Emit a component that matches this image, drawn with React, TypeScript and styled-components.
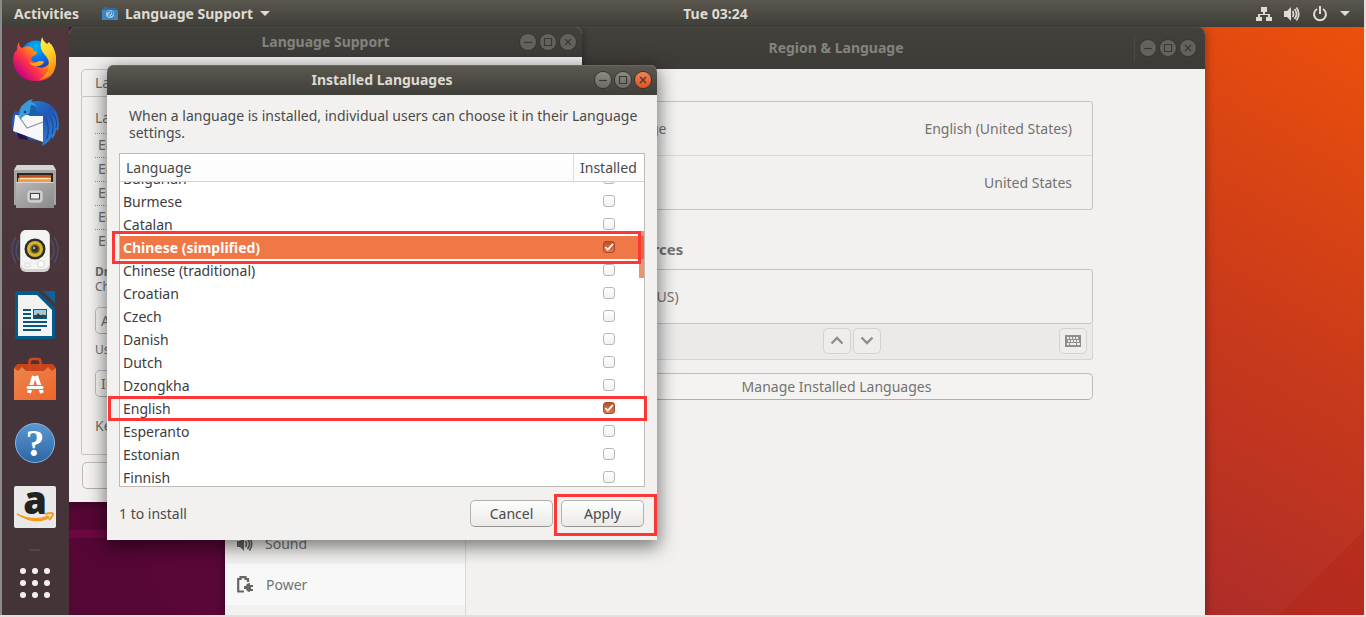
import React, { useEffect, useRef, useState } from "react";
import styled, { createGlobalStyle, css } from "styled-components";

const GlobalStyle = createGlobalStyle`
  * { box-sizing: border-box; }
  body { margin: 0; background: #fff; }
  body, button, input, table {
    font-family: "Noto Sans", "Open Sans", sans-serif;
    font-size: 14px;
    line-height: 18px;
  }
  button { margin: 0; padding: 0; cursor: default; }
  h1, h2, p, ul { margin: 0; padding: 0; }
  ul { list-style: none; }
`;

const Screen = styled.div`
  display: flex;
  flex-direction: column;
  height: 100vh;
  overflow: hidden;
  border: solid #e2e0df;
  border-width: 0 2px 2px 0;
  box-shadow: inset 2px 0 #8b8b8a;
  padding-left: 2px;
`;

/* ---------- top bar ---------- */

const TopBar = styled.header`
  display: grid;
  grid-template-columns: 10fr auto 9fr;
  align-items: center;
  height: 27px;
  flex: none;
  padding: 0 14px 0 12px;
  background: linear-gradient(#5a574e, #3e3d38);
  color: #dfdbd2;
  font-weight: 700;
`;

const BarGroup = styled.div<{ $end?: boolean }>`
  display: flex;
  align-items: center;
  gap: ${(p) => (p.$end ? 12 : 23)}px;
  justify-content: ${(p) => (p.$end ? "flex-end" : "flex-start")};
`;

const BarButton = styled.button`
  display: flex;
  align-items: center;
  gap: 7px;
  border: 0;
  background: none;
  color: inherit;
  font-weight: 700;
`;

/* ---------- desktop and dock ---------- */

const Workspace = styled.div`
  display: flex;
  flex: 1;
  min-height: 0;
`;

const Dock = styled.nav`
  display: flex;
  flex-direction: column;
  align-items: center;
  width: 67px;
  flex: none;
  padding-right: 2px;
  background: linear-gradient(#50373c, #46343a 60%, #443438);
`;

const DockButton = styled.button`
  display: grid;
  place-items: center;
  width: 64px;
  height: 64px;
  flex: none;
  border: 0;
  background: none;
`;

const DockRule = styled.hr`
  width: 10px;
  height: 2px;
  margin: 10px 0 0;
  flex: none;
  border: 0;
  background: #57464b;
`;

const Desktop = styled.main`
  position: relative;
  flex: 1;
  overflow: hidden;
  background:
    linear-gradient(#0000 503px, #6d0742 503px 511px, #0000 511px) left / 400px 100% no-repeat,
    linear-gradient(60deg, #540634, #6b0a40) left / 400px 100% no-repeat,
    linear-gradient(135deg, #0000 50%, rgba(180, 35, 20, 0.4) 50%) right bottom / 84px 84px no-repeat,
    linear-gradient(30deg, #aa2a2b, #c93a1b 50%, #ec500b) right / 240px 100% no-repeat,
    #c93a1b;
`;

/* ---------- windows ---------- */

const WindowFrame = styled.section<{ $backdrop?: boolean }>`
  position: absolute;
  display: flex;
  flex-direction: column;
  border-radius: 7px 7px 0 0;
  background: #f2f1f0;
  color: ${(p) => (p.$backdrop ? "#72726f" : "#4a4a4a")};
  box-shadow: ${(p) => (p.$backdrop ? "0 2px 10px rgba(0,0,0,.4)" : "0 5px 18px 2px rgba(0,0,0,.5)")};
`;

const RegionWindow = styled(WindowFrame)`
  left: 156px;
  top: 0;
  bottom: 0;
  width: 980px;
`;

const SupportWindow = styled(WindowFrame)`
  left: 0;
  top: 0;
  width: 513px;
  height: 475px;
`;

const DialogWindow = styled(WindowFrame)`
  left: 38px;
  top: 38px;
  width: 550px;
  height: 475px;
`;

const TitleBar = styled.header<{ $backdrop?: boolean; $tall?: boolean }>`
  display: grid;
  grid-template-columns: 1fr auto 1fr;
  align-items: center;
  flex: none;
  height: ${(p) => (p.$tall ? 42 : 30)}px;
  padding: 0 ${(p) => (p.$tall ? 9 : 6)}px;
  border-radius: 7px 7px 0 0;
  background: ${(p) => (p.$backdrop ? "linear-gradient(#42413c, #3c3b37)" : "linear-gradient(#5c594f, #3f3e39)")};
  box-shadow: inset 0 1px ${(p) => (p.$backdrop ? "#4a4944" : "#6a675d")};
  color: ${(p) => (p.$backdrop ? "#84837d" : "#dfdbd2")};
`;

const RegionTitleBar = styled(TitleBar)`
  padding-left: 251px;
`;

const WindowTitle = styled.h1`
  grid-column: 2;
  font-size: 14px;
  line-height: 18px;
  font-weight: 700;
`;

const Controls = styled.div<{ $divided?: boolean }>`
  display: flex;
  gap: 4px;
  justify-self: end;
  ${(p) =>
    p.$divided &&
    css`
      padding: 6px 0 6px 5px;
      border-left: 1px solid #4a4944;
    `}
`;

const ControlButton = styled.button<{ $backdrop?: boolean; $close?: boolean }>`
  display: grid;
  place-items: center;
  width: 16px;
  height: 16px;
  border: 0;
  border-radius: 50%;
  color: #3a3935;
  background: ${(p) =>
    p.$backdrop ? "#64625c" : p.$close ? "linear-gradient(#f58159, #e0501f)" : "linear-gradient(#8d8b84, #6c6a63)"};
  box-shadow: 0 0 0 1px ${(p) => (p.$backdrop ? "#383733" : "#35342f")};
`;

/* ---------- shared controls ---------- */

const PushButton = styled.button<{ $backdrop?: boolean }>`
  height: 27px;
  border: 1px solid ${(p) => (p.$backdrop ? "#bdbcba" : "#b3b2af")};
  border-bottom-color: ${(p) => (p.$backdrop ? "#b0afac" : "#96958f")};
  border-radius: 5px;
  background: ${(p) => (p.$backdrop ? "#f4f3f2" : "linear-gradient(#fdfdfd, #ebeae8)")};
  color: inherit;
`;

/* ---------- Region & Language ---------- */

const RegionBody = styled.div`
  display: flex;
  flex: 1;
  min-height: 0;
`;

const SideBar = styled.ul`
  display: flex;
  flex-direction: column;
  width: 241px;
  padding-top: 454px;
  border-right: 1px solid #d9d8d6;
`;

const SideItem = styled.li<{ $light?: boolean }>`
  display: flex;
  align-items: center;
  gap: 12px;
  height: 41px;
  flex: none;
  padding-left: 12px;
  background: ${(p) => (p.$light ? "#f8f8f8" : "transparent")};
`;

const RegionPane = styled.div`
  flex: 1;
  padding: 32px 112px 0 114px;
`;

const Card = styled.dl`
  margin: 0;
  border: 1px solid #c6c5c2;
  border-radius: 3px;
`;

const CardRow = styled.div`
  display: flex;
  justify-content: space-between;
  align-items: center;
  height: 53px;
  padding: 0 20px;
  dd { margin: 0; }
  & + & { border-top: 1px solid #d9d8d6; height: 54px; }
`;

const SectionTitle = styled.h2`
  margin: 30px 0 11px;
  font-size: 15px;
  line-height: 18px;
  font-weight: 700;
`;

const SourceBar = styled.div`
  display: flex;
  justify-content: flex-end;
  align-items: center;
  gap: 2px;
  height: 36px;
  margin-bottom: 13px;
  padding: 0 5px 2px;
  border: 1px solid #d5d4d2;
  border-top: 0;
  border-radius: 0 0 3px 3px;
  background: #ebeae9;
`;

const ToolButton = styled.button<{ $last?: boolean }>`
  display: grid;
  place-items: center;
  width: 28px;
  height: 26px;
  margin-left: ${(p) => (p.$last ? 176 : 0)}px;
  border: 1px solid #d3d2d0;
  border-radius: 5px;
  background: #eeedec;
  color: #8f8e88;
`;

const ManageButton = styled(PushButton)`
  width: 100%;
`;

/* ---------- Language Support ---------- */

const SupportBody = styled.div`
  display: flex;
  flex-direction: column;
  flex: 1;
  padding: 12px;
`;

const Tab = styled.div`
  align-self: flex-start;
  height: 27px;
  padding: 4px 13px;
  border: 1px solid #c6c5c2;
  border-bottom: 0;
  border-radius: 5px 5px 0 0;
`;

const TabPage = styled.div`
  height: 359px;
  padding: 12px 13px;
  border: 1px solid #c6c5c2;
  border-radius: 2px;
`;

const OrderList = styled.ul`
  margin: 6px 0 11px;
  li {
    height: 24px;
    padding: 2px 3px;
    border-top: 1px dotted #d9826b;
  }
`;

const Note = styled.p<{ $strong?: boolean }>`
  font-size: 12px;
  line-height: 15px;
  font-weight: ${(p) => (p.$strong ? 700 : 400)};
`;

const FormButton = styled(PushButton)`
  display: block;
  width: 160px;
  margin: 13px 0 8px;
  padding-left: 5px;
  text-align: left;
`;

const KeyboardRow = styled.p`
  padding-top: 12px;
`;

const HelpButton = styled(PushButton)`
  width: 84px;
  margin: 7px 0 0 1px;
`;

/* ---------- Installed Languages ---------- */

const DialogBody = styled.div`
  display: flex;
  flex-direction: column;
  flex: 1;
  min-height: 0;
  padding: 12px;
`;

const Intro = styled.p`
  margin: 0 0 12px 10px;
  line-height: 17px;
`;

const ListFrame = styled.div`
  position: relative;
  flex: none;
  height: 334px;
  border: 1px solid #bcbbb8;
  background: #fff;
`;

const ListScroll = styled.div`
  height: 100%;
  overflow-y: scroll;
  scrollbar-width: none;
`;

const LanguageTable = styled.table`
  width: 100%;
  border-collapse: separate;
  border-spacing: 0;
  table-layout: fixed;
  color: #3c3c3c;
  th {
    position: sticky;
    top: 0;
    z-index: 1;
    height: 28px;
    padding: 0 6px;
    border-bottom: 1px solid #d5d4d2;
    background: linear-gradient(#fff, #fbfbfb);
    color: #4a4a4a;
    font-weight: 400;
    text-align: left;
  }
  th + th {
    width: 71px;
    border-left: 1px solid #dedddb;
  }
`;

const LanguageRow = styled.tr<{ $selected?: boolean }>`
  td {
    height: 23px;
    padding: 0 3px;
    background: ${(p) => (p.$selected ? "#f07746" : "#fff")};
    color: ${(p) => (p.$selected ? "#fff" : "inherit")};
    font-weight: ${(p) => (p.$selected ? 700 : 400)};
  }
  td + td {
    padding: 0 0 2px;
    text-align: center;
    line-height: 0;
  }
`;

const Check = styled.input`
  appearance: none;
  width: 12px;
  height: 12px;
  margin: 0;
  border: 1px solid #b9b8b5;
  border-radius: 3px;
  background: linear-gradient(#fff, #f1f1f0);
  &:checked {
    border-color: #a8492a;
    background:
      url("data:image/svg+xml,%3Csvg xmlns='http://www.w3.org/2000/svg' viewBox='0 0 10 10'%3E%3Cpath d='M1.3 5l2.5 2.7L9 1.8' fill='none' stroke='white' stroke-width='1.8'/%3E%3C/svg%3E"),
      linear-gradient(#c34f24, #e0784f);
  }
`;

const ScrollThumb = styled.div`
  position: absolute;
  z-index: 2;
  top: 77px;
  right: 0;
  width: 5px;
  height: 47px;
  background: rgba(235, 100, 50, 0.7);
`;

const Footer = styled.footer`
  display: flex;
  align-items: center;
  gap: 8px;
  margin-top: 13px;
  padding-right: 1px;
  color: #4a4a4a;
`;

const Status = styled.span`
  flex: 1;
`;

const FooterButton = styled(PushButton)`
  width: 83px;
`;

const Highlight = styled.div<{ $box: [number, number, number, number] }>`
  position: absolute;
  z-index: 3;
  left: ${(p) => p.$box[0]}px;
  top: ${(p) => p.$box[1]}px;
  width: ${(p) => p.$box[2]}px;
  height: ${(p) => p.$box[3]}px;
  border: 3px solid #fc3736;
  pointer-events: none;
`;

/* ---------- icons ---------- */

const Caret = () => (
  <svg width="10" height="5" viewBox="0 0 10 5"><path d="M0 0h10L5 5z" fill="#dfdbd2" /></svg>
);

const AppIcon = () => (
  <svg width="16" height="14" viewBox="0 0 16 14">
    <path d="M1 0h5l1 1h7v12H1z" fill="#2b6b9f" />
    <path d="M0 3h16v10H0z" fill="#3d86bd" />
    <circle cx="8" cy="7" r="4" fill="#9fc6e2" />
    <path d="M5 5l3-1 1 2-2 1v3M10 4l1 3-2 2" stroke="#3d7fb4" fill="none" />
  </svg>
);

const NetworkIcon = () => (
  <svg width="16" height="16" viewBox="0 0 16 16" fill="#dfdbd2">
    <path d="M5 1h6v5H9v2h5v3h2v4h-6v-4h2V9H4v2h2v4H0v-4h2V8h5V6H5z" />
  </svg>
);

const VolumeIcon = ({ color = "#dfdbd2" }: { color?: string }) => (
  <svg width="16" height="16" viewBox="0 0 16 16">
    <path d="M0 5h3l4-4v14l-4-4H0z" fill={color} />
    <path d="M8.500 5q2 3 0 6M10.500 3q4 5 0 10M12.500 1.500q4.500 6.500 0 13" fill="none" stroke={color} strokeWidth="1.700" />
  </svg>
);

const PowerIcon = () => (
  <svg width="16" height="16" viewBox="0 0 16 16" fill="none" stroke="#dfdbd2" strokeWidth="2">
    <path d="M5 3a6 6 0 1 0 6 0M8 0v8" />
  </svg>
);

const BatteryIcon = () => (
  <svg width="17" height="17" viewBox="0 0 17 17">
    <path d="M7 15.500H1.200V3h2.300V1.200h5V3H11v3" fill="none" stroke="#666663" strokeWidth="2.200" />
    <path d="M7 10h2c0-2 2-3 4-3v2h3v2h-2v2h2v2h-3v1c-2 0-3.500-1-4-3H7z" fill="#666663" />
  </svg>
);

const KeyboardIcon = () => (
  <svg width="16" height="12" viewBox="0 0 16 12">
    <path d="M0 0h16v12H0z" fill="currentColor" />
    <path d="M2 3h12M3 6h12" stroke="#eeedec" strokeWidth="1.800" strokeDasharray="2 1" />
    <path d="M2 9h2M5 9h6M12 9h3" stroke="#eeedec" strokeWidth="1.800" />
  </svg>
);

const Chevron = ({ down }: { down?: boolean }) => (
  <svg width="14" height="9" viewBox="0 0 14 9" fill="none" stroke="currentColor" strokeWidth="2.400">
    <path d={down ? "M1.500 1.500L7 7l5.500-5.500" : "M1.500 7.500L7 2l5.500 5.500"} />
  </svg>
);

const FirefoxIcon = () => (
  <svg width="46" height="46" viewBox="0 0 46 46">
    <defs>
      <linearGradient id="fxBody" x1="0.900" y1="0.100" x2="0.100" y2="0.800">
        <stop offset="0" stopColor="#fff44f" />
        <stop offset="0.350" stopColor="#ff980e" />
        <stop offset="0.650" stopColor="#ff3647" />
        <stop offset="1" stopColor="#c60084" />
      </linearGradient>
      <linearGradient id="fxTail" x1="0" y1="0" x2="0.400" y2="1">
        <stop offset="0" stopColor="#fff44f" />
        <stop offset="0.500" stopColor="#ffd52c" />
        <stop offset="1" stopColor="#ff8a10" />
      </linearGradient>
      <radialGradient id="fxGlobe" cx="0.500" cy="0.200" r="0.800">
        <stop offset="0" stopColor="#00b4f5" />
        <stop offset="0.600" stopColor="#0a6be0" />
        <stop offset="1" stopColor="#3a2a9c" />
      </radialGradient>
    </defs>
    <circle cx="24" cy="20" r="15.500" fill="url(#fxGlobe)" />
    <path d="M7 6q0 5 3 6 5-3 9-1 2 1 3 4 2 0 3 1 0 3-4 4l-2 3q2 4 6 3 5-2 7 0-2 4-8 4 6 4 12-1 4-5 2-11l-3-8 4-2q5 7 5 16 0 21-20 21T1 25q0-8 4-11 0-5 2-8z" fill="url(#fxBody)" />
    <path d="M30 1q1 4 5 7l2-2q7 8 7 18 0 16-17 20 10-6 10-15 0-6-4-10-6-6-4-14z" fill="url(#fxTail)" />
    <path d="M17 26q4 2 8 0 4-2 7 0-2 4-8 4-5 0-7-4z" fill="#ffa516" />
  </svg>
);

const ThunderbirdIcon = () => (
  <svg width="48" height="48" viewBox="0 0 48 48">
    <defs>
      <linearGradient id="tbBody" x1="0" y1="0" x2="1" y2="1">
        <stop offset="0" stopColor="#2b8ad6" />
        <stop offset="0.500" stopColor="#1f58b8" />
        <stop offset="1" stopColor="#3d8fdd" />
      </linearGradient>
    </defs>
    <path d="M4 12Q-2 22 2 31l6 9 22 2-10-28z" fill="#2458b0" />
    <path d="M5 33l3 7 10 1-4-5z" fill="#2c1150" />
    <path d="M9 11Q15 2 26 2q14 0 20 12 3 10 1 18l-2-2q0 6-4 10v-3q-3 7-10 10l1-5V17L20 13z" fill="url(#tbBody)" />
    <path d="M4 16l28 0v27L2 32q1-6 2-16z" fill="#f7f7f9" />
    <path d="M7 16l9 13 16-6" fill="none" stroke="#8f959f" strokeWidth="1.200" />
    <path d="M9 21Q6 9 14 4q3-3 8-4l-2 3q4 1 5 4-2 6-8 8-4 1-8 6z" fill="#399bd8" />
    <path d="M20 6q6 0 5 6l8 5h-15z" fill="#1b5fae" />
    <circle cx="14" cy="13" r="1.300" fill="#123a66" />
    <path d="M35 20q4 8 1 20M39 17q5 9 2 18M42 14q5 8 3 15" stroke="#174a97" fill="none" strokeWidth="1.200" />
  </svg>
);

const FilesIcon = () => (
  <svg width="42" height="44" viewBox="0 0 42 44">
    <defs>
      <linearGradient id="cabinet" x1="0" y1="0" x2="1" y2="1">
        <stop offset="0" stopColor="#b8b8b8" />
        <stop offset="1" stopColor="#8a8a8a" />
      </linearGradient>
    </defs>
    <path d="M3 0h36l3 5v35H0V5z" fill="#a5a5a5" />
    <path d="M3 0h36l3 5H0z" fill="#d6d6d6" />
    <path d="M3 8h36v10H3z" fill="#2e2420" />
    <path d="M5 10h32v8H5z" fill="#c4501e" />
    <path d="M4 13h33v5H4z" fill="#f29b3f" />
    <path d="M6 13.500h31" stroke="#ffe6ba" strokeWidth="1.500" />
    <path d="M2 17h38v26H2z" fill="url(#cabinet)" />
    <path d="M2 17.500h38" stroke="#d8d8d8" />
    <rect x="14" y="26" width="14" height="11" rx="2" fill="#c6c6c6" stroke="#dcdcdc" />
    <rect x="16.500" y="28.500" width="9" height="5.500" fill="#eee" stroke="#444" />
  </svg>
);

const RhythmboxIcon = () => (
  <svg width="50" height="44" viewBox="0 0 50 44">
    <path d="M6 8q-8 13 0 26M9 11q-6 11 0 20M44 8q8 13 0 26M41 11q6 11 0 20" fill="none" stroke="#4b5477" strokeWidth="1.200" />
    <rect x="10" y="1" width="30" height="42" rx="6" fill="#d2d2d0" />
    <rect x="11" y="1" width="28" height="39" rx="5" fill="#f4f4f3" />
    <circle cx="25" cy="20" r="10.500" fill="#2c2c30" />
    <circle cx="25" cy="20" r="8" fill="#d6b52c" />
    <circle cx="25" cy="20" r="5" fill="#8c7418" />
    <circle cx="25" cy="20" r="3.500" fill="#32323a" />
    <circle cx="24" cy="19" r="1.200" fill="#aaa" />
    <circle cx="31" cy="35" r="3.500" fill="#fff" stroke="#d2d2d0" />
    <path d="M15 34h5v4h-5z" fill="none" stroke="#ddd" />
  </svg>
);

const WriterIcon = () => (
  <svg width="40" height="48" viewBox="0 0 40 48">
    <path d="M2 0h21l17 17v29q0 2-2 2H2q-2 0-2-2V2q0-2 2-2z" fill="#055a8c" />
    <path d="M28 0h12v12z" fill="#0b639b" />
    <path d="M3 4h19l15 15v26H3z" fill="#f3f3f3" />
    <path d="M8 19h8M8 23h8M8 27h8M8 31h24M8 35h24M8 39h18" stroke="#0a5480" strokeWidth="2" />
    <rect x="18" y="18" width="14" height="10" fill="#0b5b8c" />
    <path d="M19 19h12v5H19z" fill="#9cccea" />
    <path d="M19 27l4-5 3 3 2-2 3 4z" fill="#3a4030" />
    <circle cx="29" cy="21" r="1.500" fill="#e7c32d" />
  </svg>
);

const SoftwareIcon = () => (
  <svg width="42" height="44" viewBox="0 0 42 44">
    <defs>
      <linearGradient id="bag" x1="0" y1="0" x2="1" y2="1">
        <stop offset="0" stopColor="#e8884f" />
        <stop offset="1" stopColor="#f0642a" />
      </linearGradient>
    </defs>
    <path d="M3 7h36l3 4v32H0V11z" fill="#c8441b" />
    <path d="M0 11l4 3 4-4 4 4h18l4-4 4 4 4-3v32H0z" fill="url(#bag)" />
    <path d="M15.500 14V5q0-3 3-3h5q3 0 3 3v9" fill="none" stroke="#d2481b" strokeWidth="2.500" />
    <path d="M20 19l-5 17M22 19l6 17" stroke="#fff" strokeWidth="4" fill="none" />
    <rect x="12" y="28.500" width="18" height="4" rx="2" fill="#fff" stroke="#ee7038" />
  </svg>
);

const HelpIcon = () => (
  <svg width="42" height="42" viewBox="0 0 42 42">
    <defs>
      <linearGradient id="help" x1="0" y1="0" x2="0" y2="1">
        <stop offset="0" stopColor="#5a97d2" />
        <stop offset="1" stopColor="#2b67a4" />
      </linearGradient>
    </defs>
    <circle cx="21" cy="21" r="19.500" fill="url(#help)" stroke="#89b4de" />
    <text x="21" y="34" textAnchor="middle" fontFamily="Liberation Serif, serif" fontWeight="700" fontSize="37" fill="#fff">?</text>
  </svg>
);

const AmazonIcon = () => (
  <svg width="42" height="42" viewBox="0 0 42 42">
    <rect width="42" height="42" rx="2" fill="#e9e9e9" />
    <text x="21" y="28" textAnchor="middle" fontFamily="Open Sans, sans-serif" fontWeight="800" fontSize="38" fill="#222">a</text>
    <path d="M3 28q17 8 31 2l1 2q-15 7-32-4z" fill="#f79a1b" stroke="#f79a1b" strokeWidth="1.200" />
    <path d="M31 28q8-2 8 0t-4 6" fill="none" stroke="#f79a1b" strokeWidth="2" />
  </svg>
);

const GridIcon = () => (
  <svg width="30" height="30" viewBox="0 0 30 30" fill="#f4f1f2">
    {[3, 15, 27].map((y) => [3, 15, 27].map((x) => <circle key={`${x}-${y}`} cx={x} cy={y} r="3" />))}
  </svg>
);

/* ---------- pieces ---------- */

function WindowControls({ backdrop, divided }: { backdrop?: boolean; divided?: boolean }) {
  const glyphs: [string, string][] = [
    ["Minimize", "M1 5.500h8"],
    ["Maximize", "M1.500 1.500h7v7h-7z"],
    ["Close", "M2 2l6 6M8 2l-6 6"],
  ];
  return (
    <Controls $divided={divided}>
      {glyphs.map(([name, d]) => (
        <ControlButton key={name} aria-label={name} $backdrop={backdrop} $close={name === "Close"}>
          <svg width="10" height="10" viewBox="0 0 10 10" fill="none" stroke="currentColor" strokeWidth="1.200">
            <path d={d} />
          </svg>
        </ControlButton>
      ))}
    </Controls>
  );
}

const dockItems: [string, () => React.JSX.Element][] = [
  ["Firefox", FirefoxIcon],
  ["Thunderbird", ThunderbirdIcon],
  ["Files", FilesIcon],
  ["Rhythmbox", RhythmboxIcon],
  ["LibreOffice Writer", WriterIcon],
  ["Ubuntu Software", SoftwareIcon],
  ["Help", HelpIcon],
  ["Amazon", AmazonIcon],
];

const languages = [
  "Bulgarian", "Burmese", "Catalan", "Chinese (simplified)", "Chinese (traditional)", "Croatian", "Czech",
  "Danish", "Dutch", "Dzongkha", "English", "Esperanto", "Estonian", "Finnish",
];

function LanguageList() {
  const scroll = useRef<HTMLDivElement>(null);
  const [installed, setInstalled] = useState<string[]>(["Chinese (simplified)", "English"]);

  useEffect(() => {
    if (scroll.current) scroll.current.scrollTop = 15;
  }, []);

  const toggle = (name: string) =>
    setInstalled((list) => (list.includes(name) ? list.filter((n) => n !== name) : [...list, name]));

  return (
    <ListFrame>
      <ListScroll ref={scroll}>
        <LanguageTable>
          <thead>
            <tr>
              <th>Language</th>
              <th>Installed</th>
            </tr>
          </thead>
          <tbody>
            {languages.map((name) => (
              <LanguageRow key={name} $selected={name === "Chinese (simplified)"}>
                <td>{name}</td>
                <td>
                  <Check
                    type="checkbox"
                    aria-label={name}
                    checked={installed.includes(name)}
                    onChange={() => toggle(name)}
                  />
                </td>
              </LanguageRow>
            ))}
          </tbody>
        </LanguageTable>
      </ListScroll>
      <ScrollThumb />
    </ListFrame>
  );
}

export default function App() {
  return (
    <Screen>
      <GlobalStyle />
      <TopBar>
        <BarGroup>
          <BarButton>Activities</BarButton>
          <BarButton><AppIcon />Language Support<Caret /></BarButton>
        </BarGroup>
        <BarButton>Tue 03:24</BarButton>
        <BarGroup $end>
          <NetworkIcon />
          <VolumeIcon />
          <PowerIcon />
          <Caret />
        </BarGroup>
      </TopBar>
      <Workspace>
        <Dock aria-label="Dock">
          {dockItems.map(([name, Icon]) => (
            <DockButton key={name} aria-label={name}><Icon /></DockButton>
          ))}
          <DockRule />
          <DockButton aria-label="Show Applications"><GridIcon /></DockButton>
        </Dock>
        <Desktop>
          <RegionWindow $backdrop>
            <RegionTitleBar $backdrop $tall>
              <WindowTitle>Region &amp; Language</WindowTitle>
              <WindowControls backdrop divided />
            </RegionTitleBar>
            <RegionBody>
              <SideBar>
                <SideItem><VolumeIcon color="#666663" />Sound</SideItem>
                <SideItem $light><BatteryIcon />Power</SideItem>
              </SideBar>
              <RegionPane>
                <Card>
                  <CardRow><dt>Language</dt><dd>English (United States)</dd></CardRow>
                  <CardRow><dt>Formats</dt><dd>United States</dd></CardRow>
                </Card>
                <SectionTitle>Input Sources</SectionTitle>
                <Card>
                  <CardRow><dt>English (US)</dt></CardRow>
                </Card>
                <SourceBar>
                  <ToolButton aria-label="Move up"><Chevron /></ToolButton>
                  <ToolButton aria-label="Move down"><Chevron down /></ToolButton>
                  <ToolButton $last aria-label="Show keyboard layout"><KeyboardIcon /></ToolButton>
                </SourceBar>
                <ManageButton $backdrop>Manage Installed Languages</ManageButton>
              </RegionPane>
            </RegionBody>
          </RegionWindow>

          <SupportWindow $backdrop>
            <TitleBar $backdrop>
              <WindowTitle>Language Support</WindowTitle>
              <WindowControls backdrop />
            </TitleBar>
            <SupportBody>
              <Tab>Language</Tab>
              <TabPage>
                <p>Language</p>
                <OrderList>
                  {[1, 2, 3, 4, 5].map((n) => <li key={n}>English</li>)}
                </OrderList>
                <Note $strong>Drag</Note>
                <Note>Changes</Note>
                <FormButton $backdrop>Apply</FormButton>
                <Note>Use</Note>
                <FormButton $backdrop>Install</FormButton>
                <KeyboardRow>Keyboard</KeyboardRow>
              </TabPage>
              <HelpButton $backdrop aria-label="Help" />
            </SupportBody>
          </SupportWindow>

          <DialogWindow role="dialog" aria-label="Installed Languages">
            <TitleBar>
              <WindowTitle>Installed Languages</WindowTitle>
              <WindowControls />
            </TitleBar>
            <DialogBody>
              <Intro>
                When a language is installed, individual users can choose it in their Language settings.
              </Intro>
              <LanguageList />
              <Footer>
                <Status>1 to install</Status>
                <FooterButton>Cancel</FooterButton>
                <FooterButton>Apply</FooterButton>
              </Footer>
            </DialogBody>
            <Highlight $box={[5, 166, 529, 33]} />
            <Highlight $box={[1, 331, 539, 25]} />
            <Highlight $box={[447, 429, 103, 42]} />
          </DialogWindow>
        </Desktop>
      </Workspace>
    </Screen>
  );
}
